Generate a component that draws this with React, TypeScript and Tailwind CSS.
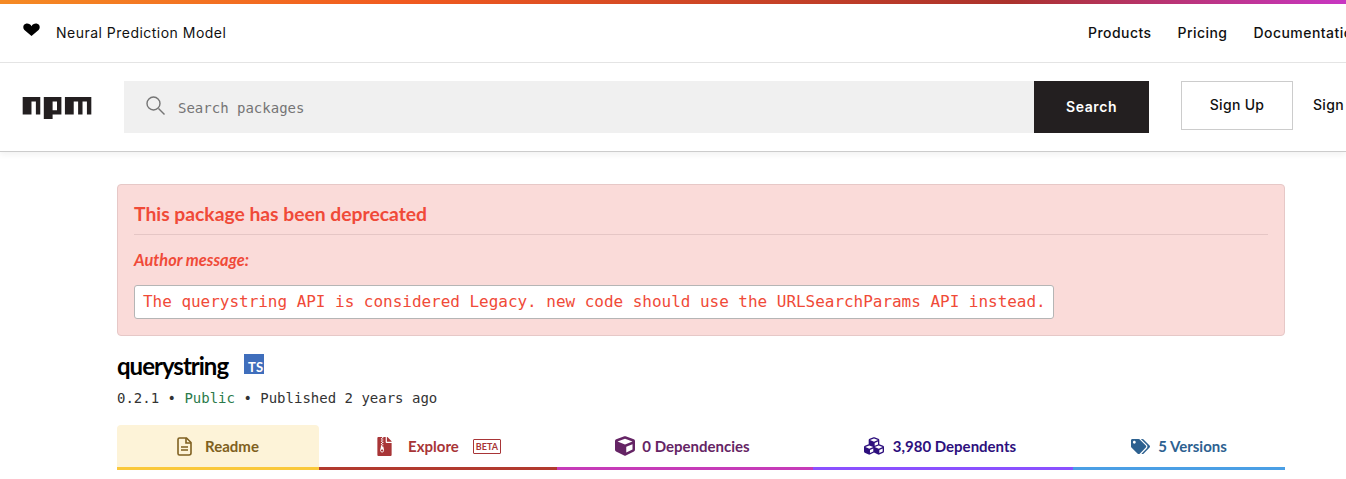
import React from "react";
import { FaCube, FaCubes, FaTags, FaFileArchive } from "react-icons/fa";

const poppins = "font-['Inter','Noto_Sans',sans-serif]";
const source = "font-['Lato','Noto_Sans',sans-serif]";
const mono = "font-['DejaVu_Sans_Mono','Liberation_Mono',monospace]";

function ReadmeIcon() {
  return (
    <svg width="15" height="19" viewBox="0 0 15 19" fill="none" stroke="#7f6020" strokeWidth="1.6">
      <path d="M2.5 1h7l4.500 4.500v10.500a2 2 0 0 1-2 2H2.500a1.500 1.500 0 0 1-1.500-1.500V2.500a1.500 1.500 0 0 1 1.500-1.500Z" />
      <path d="M9 1v5h5" />
      <path d="M4 10h7M4 13h7" />
    </svg>
  );
}

function Tab({ width, border, color, bg, gap, icon, label, extra }: { width: string; border: string; color: string; bg?: string; gap: string; icon: React.ReactNode; label: string; extra?: React.ReactNode }) {
  return (
    <div className={`${width} ${border} ${bg ?? ""} ${gap} h-[45px] border-b-[3px] flex items-center justify-center rounded-t-[4px] ${color} text-[15px] font-bold ${source}`}>
      {icon}
      <span>{label}</span>
      {extra}
    </div>
  );
}

export default function App() {
  return (
    <div className="w-[1346px] h-[479px] overflow-hidden bg-white text-black">
      <div className="h-1 bg-[linear-gradient(90deg,#f58a24_0%,#f15a1f_30%,#ab322c_75%,#c836c3_100%)]" />
      <div className={`h-[59px] border-b border-[#e5e5e5] flex items-center pl-[23px] pb-[1px] whitespace-nowrap ${poppins}`}>
        <svg width="17" height="13" viewBox="0 0 18 14" preserveAspectRatio="none" className="mb-[6px] mr-[16px] shrink-0">
          <path d="M9 14 1.500 7.500C-.5 5.500 0 1.500 3 .8 5.500.2 8 1.500 9 3.500 10 1.500 12.500.2 15 .8 18 1.500 18.500 5.500 16.500 7.500Z" fill="#000" />
        </svg>
        <span className="text-[14px] tracking-[0.48px] text-[#111]">Neural Prediction Model</span>
        <div className="ml-auto flex gap-[26px] text-[14px] tracking-[0.45px] font-medium text-[#111] w-[258px] shrink-0 overflow-hidden">
          <span>Products</span>
          <span>Pricing</span>
          <span>Documentation</span>
        </div>
      </div>
      <div className="h-[89px] border-b border-[#cccccc] shadow-[0_3px_6px_rgba(0,0,0,0.05)] flex items-start pl-[22px] pt-[18px] whitespace-nowrap">
        <svg width="70" height="22" viewBox="0 0 780 250" className="mt-[16px] mr-[32px] shrink-0">
          <path fill="#231f20" d="M240,250h100v-50h100V0H240V250z M340,50h50v100h-50V50z M480,0v200h100V50h50v150h50V50h50v150h50V0H480z M0,200h100V50h50v150h50V0H0V200z" />
        </svg>
        <div className="w-[910px] h-[52px] bg-[#f0f0f0] flex items-center pl-[22px] shrink-0">
          <svg width="19" height="19" viewBox="0 0 19 19" fill="none" stroke="#757575" strokeWidth="1.4" className="mr-[13px] mb-[3px]">
            <circle cx="7.500" cy="7.500" r="6.500" />
            <path d="m12.500 12.500 6 6" />
          </svg>
          <span className={`text-[14px] text-[#757575] pt-[2px] ${mono}`}>Search packages</span>
        </div>
        <div className={`w-[115px] h-[52px] bg-[#231f20] text-white text-[14px] tracking-[0.6px] font-semibold flex items-center justify-center pb-[2px] shrink-0 ${poppins}`}>Search</div>
        <div className={`ml-[32px] w-[112px] h-[49px] border border-[#cccccc] text-[14px] tracking-[0.3px] font-medium text-[#111] flex items-center justify-center pb-[2px] shrink-0 ${poppins}`}>Sign Up</div>
        <div className={`ml-[20px] h-[49px] flex items-center pb-[2px] text-[14px] tracking-[0.3px] font-medium text-[#111] ${poppins}`}>Sign In</div>
      </div>
      <div className="w-[1168px] ml-[117px] pt-[32px]">
        <div className="h-[152px] bg-[#fadbd9] border border-[#e6c8c7] rounded-[4px] px-4 pt-[16px]">
          <div className={`h-[34px] border-b border-[#e5c6c5] text-[19.300px] font-bold text-[#f04a38] leading-[25px] ${source}`}>This package has been deprecated</div>
          <div className={`mt-[14px] text-[16.400px] font-bold italic text-[#f04a38] leading-[22px] ${source}`}>Author message:</div>
          <div className={`mt-[14px] w-[920px] h-[34px] bg-white border border-[#b5b5b5] rounded-[3px] pl-2 flex items-center whitespace-nowrap text-[16px] tracking-[-0.03px] text-[#f04a38] ${mono}`}>
            The querystring API is considered Legacy. new code should use the URLSearchParams API instead.
          </div>
        </div>
        <div className="mt-[14px] flex items-start h-[36px]">
          <span className={`text-[24px] tracking-[-1px] font-bold text-black leading-[32px] ${source}`}>querystring</span>
          <div className={`ml-[16px] mt-[4px] w-5 h-5 bg-[#3f6ebc] text-white text-[13px] font-bold flex items-end justify-center pl-[3px] leading-[14px] ${source}`}>TS</div>
        </div>
        <div className={`h-[31px] flex items-center text-[14px] text-[#333] mt-[-3px] whitespace-nowrap ${mono}`}>
          0.2.1 • <span className="text-[#2c7a4b] mx-[8.4px]">Public</span> • Published 2 years ago
        </div>
        <div className="mt-[11px] flex">
          <Tab width="w-[202px]" gap="gap-[13px]" border="border-[#fac83a]" bg="bg-[#fdf3d8]" color="text-[#7f6020]" icon={<ReadmeIcon />} label="Readme" />
          <Tab width="w-[238px]" gap="gap-[14px]" border="border-[#b13a2f]" color="text-[#a83537]" icon={<FaFileArchive size={19} color="#a83537" />} label="Explore"
            extra={<span className="border border-[#a83537] rounded-[1px] text-[9px] leading-[13px] px-[2px] font-bold">BETA</span>} />
          <Tab width="w-[256px] pr-[5px]" gap="gap-[7px]" border="border-[#c63bb8]" color="text-[#652465]" icon={<FaCube size={20} color="#652465" />} label="0 Dependencies" />
          <Tab width="w-[260px] pr-[6px]" gap="gap-[9px]" border="border-[#8a50ff]" color="text-[#2d0f7d]" icon={<FaCubes size={20} color="#2d0f7d" />} label="3,980 Dependents" />
          <Tab width="w-[212px]" gap="gap-[8px]" border="border-[#4a9fe5]" color="text-[#2d6190]" icon={<FaTags size={19} color="#2d6190" />} label="5 Versions" />
        </div>
      </div>
    </div>
  );
}
